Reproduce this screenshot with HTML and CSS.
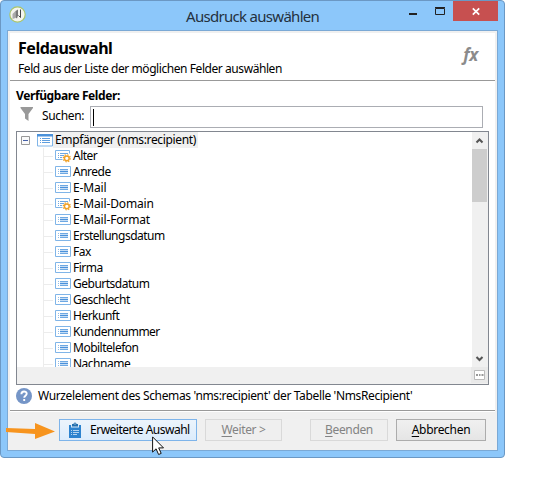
FILE: index.html
```html
<!DOCTYPE html>
<html lang="de">
<head>
<meta charset="utf-8">
<title>Ausdruck auswählen</title>
<link rel="stylesheet" href="styles.css">
</head>
<body>
<svg class="defs" width="0" height="0" aria-hidden="true">
  <symbol id="field" viewBox="0 0 16 14">
    <path d="M.5 1.500h15v10H.5z" fill="#fff" stroke="#80b5e8"/>
    <path d="M3 4h1v1H3zM3 6h1v1H3zM3 8h1v1H3z" fill="#8fbdea"/>
    <path d="M5 4h8v1H5zM5 8h8v1H5z" fill="#6ea8e2"/><path d="M5 6h8v1H5z" fill="#4b91da"/><path d="M5 5h8v1H5zM5 7h8v1H5z" fill="#c5ddf5"/>
  </symbol>
  <symbol id="calc" viewBox="0 0 16 14">
    <path d="M7.500 10.500H.5V1.500h14v3" fill="none" stroke="#80b5e8"/>
    <path d="M3 4h1v1H3zM3 6h1v1H3zM3 8h1v1H3zM5 4h8v1H5zM5 6h4v1H5zM5 8h2v1H5z" fill="#6ea8e2"/>
    <circle cx="11.800" cy="9.300" r="3.500" fill="none" stroke="#f0a229" stroke-width="1.300" stroke-dasharray="1.300 1.450"/>
    <circle cx="11.800" cy="9.300" r="2.400" fill="#fff" stroke="#f0a229" stroke-width="1.500"/>
  </symbol>
</svg>
<main class="window">
  <header class="titlebar">
    <svg class="logo" width="17" height="17" viewBox="0 0 17 17"><circle cx="8.500" cy="8.500" r="7.700" fill="#f4f4ee" stroke="#a9c46a" stroke-width="1.200"/><path d="M3.500 8l3-3v7l-3 1z" fill="#aaa"/><path d="M6.500 5l2.500-1.500v6l-1 3-1.500-1z" fill="#777"/><path d="M11.500 3.500v8L9.500 9.500" fill="none" stroke="#444"/></svg>
    <h1 class="caption">Ausdruck auswählen</h1>
    <svg class="controls" width="90" height="20" viewBox="0 0 90 20"><path d="M45 0h45v20H45z" fill="#c75050"/><path d="M1 12h8v2H1z" fill="#222"/><path d="M27.500 7.500h9v6h-9zM27 6.500h10" fill="none" stroke="#222"/><path d="M64.800 7.300l6.400 6.400M71.200 7.300l-6.400 6.400" stroke="#fff" stroke-width="1.700"/></svg>
  </header>
  <div class="client">
    <section class="page">
      <div class="heading">
        <h2>Feldauswahl</h2>
        <p>Feld aus der Liste der möglichen Felder auswählen</p>
        <span class="fx">fx</span>
      </div>
      <div class="available">Verfügbare Felder:</div>
      <div class="search">
        <svg width="14" height="15" viewBox="0 0 14 15"><path d="M.5 0h12.500v1L8.500 7v7L5 11.500V7L.5 1z" fill="#999"/></svg>
        <label>Suchen:</label>
        <div class="input"><i></i></div>
      </div>
      <div class="tree">
        <div class="view">
          <div class="list">
            <div class="root"><svg class="minus" width="9" height="9"><path d="M.5.5h8v8h-8z" fill="#fafafa" stroke="#999"/><path d="M2 4.500h5" stroke="#4560a8"/></svg><svg class="table" width="16" height="13" viewBox="0 0 16 13"><path d="M.5.5h15v11.500H.5z" fill="#fff" stroke="#80b5e8"/><path d="M0 0h16v2.500H0z" fill="#4b91da"/><path d="M3 4h1v1H3zM3 6h1v1H3zM3 8h1v1H3zM5 4h8v1H5zM5 6h8v1H5zM5 8h8v1H5z" fill="#5e9edf"/></svg><span>Empfänger (nms:recipient)</span></div>
            <ul>
              <li><svg><use href="#calc"/></svg><span>Alter</span></li>
              <li><svg><use href="#field"/></svg><span>Anrede</span></li>
              <li><svg><use href="#field"/></svg><span class="wide">E-Mail</span></li>
              <li><svg><use href="#calc"/></svg><span class="wide">E-Mail-Domain</span></li>
              <li><svg><use href="#field"/></svg><span class="wide">E-Mail-Format</span></li>
              <li><svg><use href="#field"/></svg><span>Erstellungsdatum</span></li>
              <li><svg><use href="#field"/></svg><span>Fax</span></li>
              <li><svg><use href="#field"/></svg><span>Firma</span></li>
              <li><svg><use href="#field"/></svg><span>Geburtsdatum</span></li>
              <li><svg><use href="#field"/></svg><span>Geschlecht</span></li>
              <li><svg><use href="#field"/></svg><span>Herkunft</span></li>
              <li><svg><use href="#field"/></svg><span>Kundennummer</span></li>
              <li><svg><use href="#field"/></svg><span>Mobiltelefon</span></li>
              <li><svg><use href="#field"/></svg><span>Nachname</span></li>
            </ul>
          </div>
          <div class="scroll">
            <svg width="15" height="17"><path d="M4.500 10.500l3-3 3 3" fill="none" stroke="#555" stroke-width="2"/></svg>
            <div class="thumb"></div>
            <svg width="15" height="17"><path d="M4.500 7l3 3 3-3" fill="none" stroke="#555" stroke-width="2"/></svg>
          </div>
        </div>
        <div class="strip"><svg width="17" height="16"><path d="M3.500 3.500h10v9h-10z" fill="#fff" stroke="#bbb"/><path d="M5 7h2v2H5zM8 7h1.500v2H8zM10.500 7h2v2h-2z" fill="#999"/></svg></div>
      </div>
      <div class="hint"><svg width="16" height="16" viewBox="0 0 16 16"><circle cx="8" cy="8" r="8" fill="#7595c7"/><path d="M5.400 6.200c0-3.600 5.300-3.400 5.300-.4 0 1.900-2.500 1.900-2.500 3.900M8.200 11v2" fill="none" stroke="#fff" stroke-width="1.900"/></svg><span>Wurzelelement des Schemas 'nms:recipient' der Tabelle 'NmsRecipient'</span></div>
    </section>
    <footer class="actions">
      <button class="advanced"><svg width="14" height="16" viewBox="0 0 14 16"><path d="M1 3h12v13H1z" fill="#2d83cf"/><path d="M3 3h8v2.500H3z" fill="#d8e9f8"/><path d="M4 2h1.500a1.500 1.500 0 0 1 3 0H10v2.500H4z" fill="#236fae"/><path d="M6.500 1.500h1v1h-1z" fill="#fff"/><path d="M3 8.500h1M5 8.500h6M3 10.500h1M5 10.500h6M3 12.500h1M5 12.500h4" stroke="#b4d4ef"/></svg><span>Erweiterte Auswahl</span></button>
      <button class="next" disabled><span><u>W</u>eiter &gt;</span></button>
      <button class="finish" disabled><span><u>B</u>eenden</span></button>
      <button class="cancel"><span><u>A</u>bbrechen</span></button>
    </footer>
  </div>
</main>
<svg class="arrow" width="50" height="18" viewBox="0 0 50 18"><path d="M0 6l29 1V1l20 8.500L29 17v-5L0 10z" fill="#f7941e"/></svg>
<svg class="cursor" width="13" height="20" viewBox="0 0 13 20"><path d="M.6.900v15.200l3.500-3.300 2.500 5.700 2.600-1.100-2.500-5.500h4.800z" fill="#fff" stroke="#111"/></svg>
</body>
</html>
```
FILE: styles.css
```css
* { box-sizing: border-box; }
body { margin: 0; background: #fff; color: #000; font: 12px/16px "Noto Sans", "Open Sans", sans-serif; letter-spacing: -.36px; white-space: nowrap; }
h1, h2, p, ul { margin: 0; padding: 0; list-style: none; }
svg { display: block; flex: none; }
.defs { position: absolute; }
.window { width: 505px; height: 458px; border: 1px solid #6b98c4; border-radius: 4px; background: #8cc7fa; padding: 0 6px 6px; }
.titlebar { height: 29px; display: flex; align-items: flex-start; }
.logo { margin: 5px 0 0 2px; }
.caption { flex: 1; margin: 3px 0 0 160px; font-size: 15px; line-height: 24px; font-weight: 400; letter-spacing: -.7px; color: #24313e; }
.client { height: 421px; border: 1px solid #7ba9d5; background: #f0f0f0; padding: 2px; }
.page { height: 378px; background: #fff; border-bottom: 1px solid #999; }
.heading { position: relative; height: 48px; border-bottom: 1px solid #999; padding: 4px 8px 0; }
h2 { font-size: 16px; line-height: 22px; letter-spacing: -.48px; }
.heading p { margin-top: 2px; letter-spacing: -.43px; }
.fx { position: absolute; right: 17px; top: 11px; font: italic bold 17px/22px "Open Sans", sans-serif; color: #8b8b8b; }
.available { margin: 7px 0 0 6px; font-weight: 700; letter-spacing: -.4px; }
.search { display: flex; height: 22px; margin: 2px 0 3px 10px; }
.search svg { margin-top: 1px; }
.search label { width: 48px; margin: 2px 0 0 8px; }
.input { width: 393px; margin-top: 0; border: 1px solid #abadb3; padding: 2px; }
.input i { display: block; width: 1px; height: 17px; background: #000; }
.tree { width: 473px; height: 254px; margin-left: 6px; border: 1px solid #828790; }
.view { display: flex; height: 235px; overflow: hidden; }
.list { flex: 1; }
.root { display: flex; height: 16px; align-items: center; padding-left: 4px; }
.root span { background: #f0f0f0; padding: 0 2px; height: 16px; }
.table { margin: 0 0 0 7px; }
ul { margin-left: 26px; }
li { display: flex; height: 16px; align-items: center; letter-spacing: -.5px; background: linear-gradient(#ececec, #ececec) 0 0 / 1px 100% no-repeat, linear-gradient(#ececec, #ececec) 0 8px / 10px 1px no-repeat; }
li svg { width: 16px; height: 14px; margin: 0 2px 0 12px; }
.wide { letter-spacing: -.15px; }
.scroll { width: 16px; background: #f0f0f0; display: flex; flex-direction: column; }
.thumb { width: 15px; height: 53px; background: #cdcdcd; margin-bottom: auto; }
.strip { height: 17px; background: #f0f0f0; display: flex; justify-content: flex-end; }
.strip svg { background: #e9e9e9; }
.hint { display: flex; align-items: center; gap: 6px; margin: 3px 0 0 6px; }
.actions { display: flex; padding: 7px 9px 0 49px; border-top: 1px solid #fff; }
button { display: flex; align-items: center; justify-content: center; height: 22px; padding: 0; border: 1px solid #acacac; background: linear-gradient(#f0f0f0, #e5e5e5); font: inherit; letter-spacing: inherit; color: #000; }
button:disabled { color: #838383; background: #efefef; border-color: #d9d9d9; }
u { text-underline-offset: 2px; }
.advanced { width: 138px; border-color: #7eb4ea; background: linear-gradient(#ecf4fc, #dcecfc); justify-content: flex-start; gap: 8px; padding-left: 8px; letter-spacing: -.5px; }
.next { width: 77px; margin-left: 8px; }
.finish { width: 78px; margin-left: 28px; }
.cancel { width: 90px; margin-left: 8px; letter-spacing: -.3px; }
.arrow { position: absolute; left: 6px; top: 422px; }
.cursor { position: absolute; left: 152px; top: 436px; }
```
